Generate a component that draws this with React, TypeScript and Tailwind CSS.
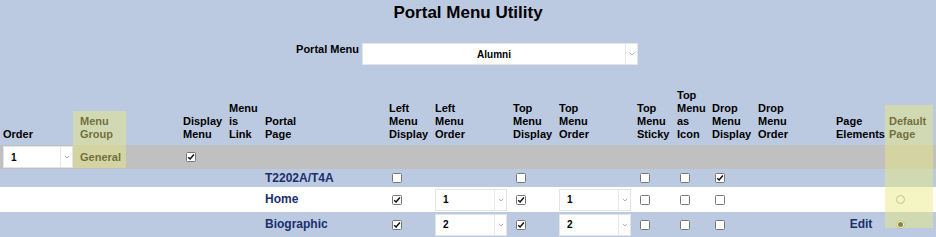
import React from 'react';

const cols = [77, 103, 46, 36, 124, 46, 78, 46, 78, 40, 35, 46, 78, 53, 50];

const headers: string[][] = [
  ['Order'],
  ['Menu', 'Group'],
  ['Display', 'Menu'],
  ['Menu', 'is', 'Link'],
  ['Portal', 'Page'],
  ['Left', 'Menu', 'Display'],
  ['Left', 'Menu', 'Order'],
  ['Top', 'Menu', 'Display'],
  ['Top', 'Menu', 'Order'],
  ['Top', 'Menu', 'Sticky'],
  ['Top', 'Menu', 'as', 'Icon'],
  ['Drop', 'Menu', 'Display'],
  ['Drop', 'Menu', 'Order'],
  ['Page', 'Elements'],
  ['Default', 'Page'],
];

const Chevron = () => (
  <svg width="6" height="4" viewBox="0 0 6 4">
    <path d="M0.8 0.8 L3 3 L5.2 0.8" stroke="#a8a8a8" strokeWidth="0.9" fill="none" />
  </svg>
);

const Select = ({ value, width, center = false }: { value: string; width: string; center?: boolean }) => (
  <div className={`flex h-[22px] bg-white border border-[#e4e4e4] ${width}`}>
    <div className={`flex-1 flex items-center text-[10px] font-bold text-black ${center ? 'justify-center' : 'pl-[7px]'}`}>
      {value}
    </div>
    <div className="w-[12px] border-l border-[#e8e8e8] flex items-center justify-center">
      <Chevron />
    </div>
  </div>
);

const Check = ({ checked = false }: { checked?: boolean }) => (
  <span className="ml-[3px] inline-flex w-[10px] h-[10px] items-center justify-center bg-white border border-[#777777] rounded-[1.5px]">
    {checked && (
      <svg width="8" height="8" viewBox="0 0 8 8">
        <path d="M1.2 4.2 L3.1 6 L6.9 1.4" stroke="#111" strokeWidth="1.5" fill="none" />
      </svg>
    )}
  </span>
);

const Radio = ({ checked = false }: { checked?: boolean }) => (
  <span className="ml-[7px] inline-flex w-[9px] h-[9px] rounded-full border border-[#a0a0a0] bg-white items-center justify-center">
    {checked && <span className="w-[5px] h-[5px] rounded-full bg-[#2a2a2a]" />}
  </span>
);

const Cell = ({ children, className = '' }: { children?: React.ReactNode; className?: string }) => (
  <td className={`pl-[3px] p-0 align-middle ${className}`}>
    <div className="flex items-center">{children}</div>
  </td>
);

const PageLink = ({ text }: { text: string }) => (
  <span className="text-[12px] font-bold text-[#1b2f6d]">{text}</span>
);

export default function App() {
  return (
    <div className="w-[936px] h-[237px] overflow-hidden bg-[#bccae1] font-['Liberation_Sans',Arial,sans-serif] text-black">
      <h1 className="pt-[3px] text-center text-[17px] leading-[20px] font-bold">Portal Menu Utility</h1>

      <div className="mt-[20px] flex items-start">
        <div className="w-[362px] pr-[3px] text-right text-[11px] leading-[13px] font-bold">Portal Menu</div>
        <Select value="Alumni" width="w-[276px]" center />
      </div>

      <div className="relative mt-[24px]">
        <table className="table-fixed border-collapse w-[936px] text-[11px] leading-[13px]">
          <colgroup>
            {cols.map((w, i) => (
              <col key={i} style={{ width: w }} />
            ))}
          </colgroup>
          <thead>
            <tr>
              {headers.map((lines, i) => (
                <th key={i} className="p-0 pl-[3px] pb-[4px] align-bottom text-left font-bold whitespace-nowrap">
                  {lines.map((l, j) => (
                    <div key={j}>{l}</div>
                  ))}
                </th>
              ))}
            </tr>
          </thead>
          <tbody className="font-bold">
            <tr className="h-[24px] bg-[#c0c0c0]">
              <Cell><Select value="1" width="w-[70px]" /></Cell>
              <Cell><span className="text-[11px]">General</span></Cell>
              <Cell><Check checked /></Cell>
              <Cell />
              <Cell />
              <Cell />
              <Cell />
              <Cell />
              <Cell />
              <Cell />
              <Cell />
              <Cell />
              <Cell />
              <Cell />
              <Cell />
            </tr>
            <tr className="h-[18px]">
              <Cell />
              <Cell />
              <Cell />
              <Cell />
              <Cell><PageLink text="T2202A/T4A" /></Cell>
              <Cell><Check /></Cell>
              <Cell />
              <Cell><Check /></Cell>
              <Cell />
              <Cell><Check /></Cell>
              <Cell><Check /></Cell>
              <Cell><Check checked /></Cell>
              <Cell />
              <Cell />
              <Cell />
            </tr>
            <tr className="h-[25px] bg-white">
              <Cell />
              <Cell />
              <Cell />
              <Cell />
              <Cell><PageLink text="Home" /></Cell>
              <Cell><Check checked /></Cell>
              <Cell><Select value="1" width="w-[72px]" /></Cell>
              <Cell><Check checked /></Cell>
              <Cell><Select value="1" width="w-[72px]" /></Cell>
              <Cell><Check /></Cell>
              <Cell><Check /></Cell>
              <Cell><Check /></Cell>
              <Cell />
              <Cell />
              <Cell><Radio /></Cell>
            </tr>
            <tr className="h-[25px]">
              <Cell />
              <Cell />
              <Cell />
              <Cell />
              <Cell><PageLink text="Biographic" /></Cell>
              <Cell><Check checked /></Cell>
              <Cell><Select value="2" width="w-[72px]" /></Cell>
              <Cell><Check checked /></Cell>
              <Cell><Select value="2" width="w-[72px]" /></Cell>
              <Cell><Check /></Cell>
              <Cell><Check /></Cell>
              <Cell><Check /></Cell>
              <Cell />
              <td className="p-0 pl-[3px] align-middle text-center">
                <span className="text-[12px] font-bold text-[#1b2f6d]">Edit</span>
              </td>
              <Cell><Radio checked /></Cell>
            </tr>
          </tbody>
        </table>

        {/* highlight overlays */}
        <div className="absolute left-[73px] top-[22px] w-[53px] h-[57px] bg-[rgba(234,234,128,0.47)] pointer-events-none" />
        <div className="absolute left-[885px] top-[16px] w-[48px] h-[123px] bg-[rgba(234,234,128,0.47)] pointer-events-none" />
      </div>
    </div>
  );
}
